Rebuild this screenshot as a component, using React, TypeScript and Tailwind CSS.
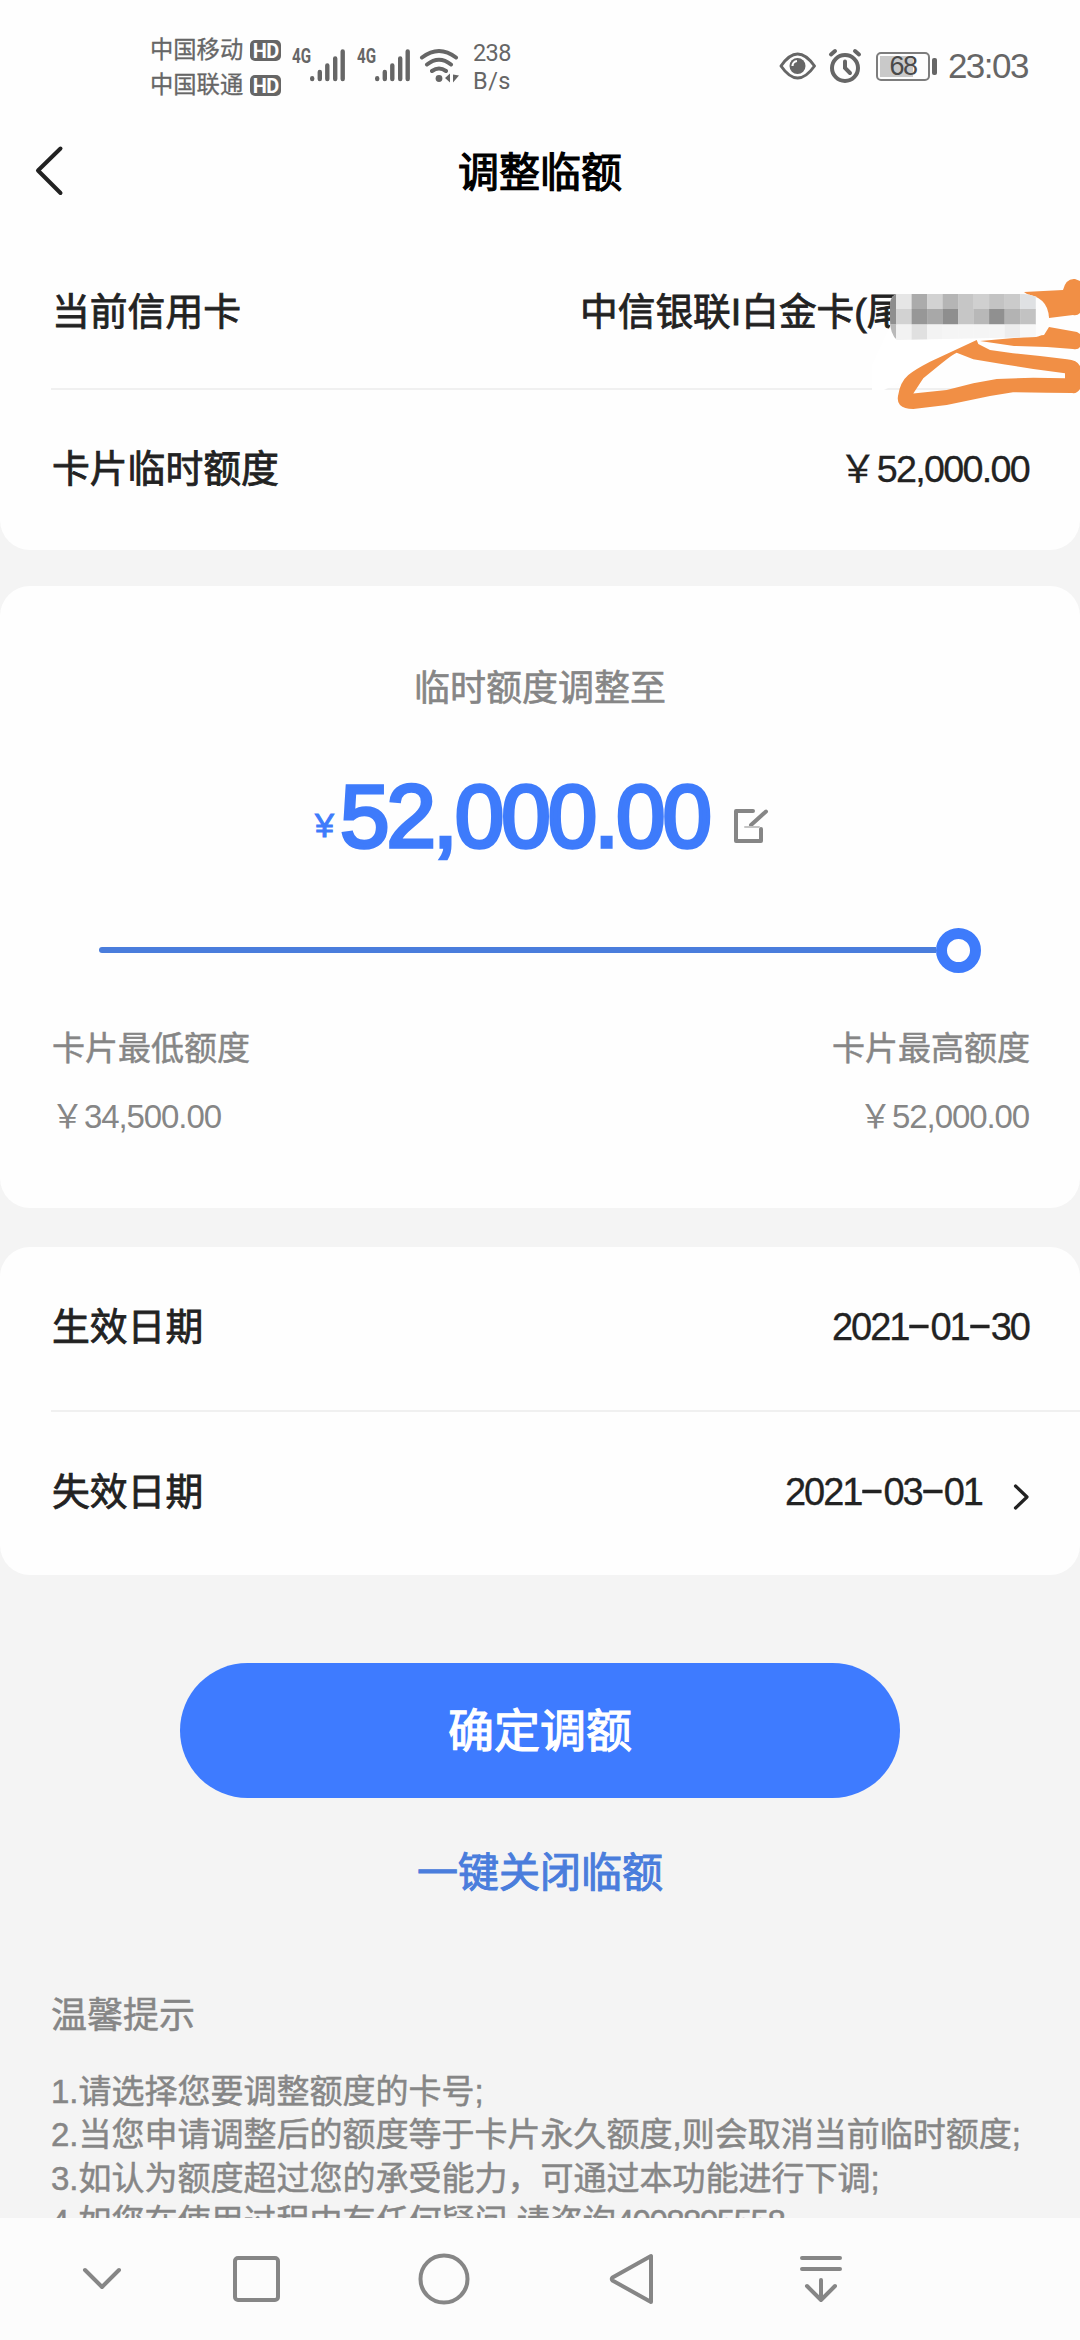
import type { ReactNode } from 'react'

const TIPS = [
  { text: '1.请选择您要调整额度的卡号;' },
  { text: '2.当您申请调整后的额度等于卡片永久额度,则会取消当前临时额度;' },
  { text: '3.如认为额度超过您的承受能力，可通过本功能进行下调;' },
  { text: '4.如您在使用过程中有任何疑问,请咨询', phone: '4008895558' },
]

// mosaic cells, 3 rows from top to bottom
const MOSAIC = [
  ['#8d8d8d', '#e6e6e6', '#ababab', '#d2d2d2', '#b5b5b5', '#c6c6c6', '#d0d0d0', '#c3c3c3', '#cbcbcb', '#dfe1e3'],
  ['#8f8f8f', '#d2d2d2', '#979797', '#a8a8a8', '#8e8e8e', '#c6c6c6', '#b8b8b8', '#909090', '#b3b3b3', '#c2c2c2'],
  ['#b9b9b9', '#f2f2f2', '#e0e0e0', '#f3f3f3', '#f5f5f5', '#f5f5f5', '#f5f5f5', '#f5f5f5', '#ededed', '#f7f7f7'],
]

function Signal() {
  return (
    <div className="flex">
      <span className="w-[18px] h-[18px] text-[20px] leading-[18px] font-bold font-[Roboto] origin-left scale-x-[0.76]">4G</span>
      <svg width="35" height="36" viewBox="0 0 35 36" stroke="#666" strokeWidth="4.4" strokeLinecap="round">
        <path d="M2.2 31.300v.7M9.800 25v7M17.300 18.500v13.500M25.200 11.500v20.500M32.700 4.500v27.500" />
      </svg>
    </div>
  )
}

function Carrier({ name }: { name: string }) {
  return (
    <div className="flex items-center gap-[7px] h-[35px]">
      <span className="text-[23.300px] leading-[35px] [-webkit-text-stroke:0.3px_#666]">{name}</span>
      <span className="w-[31px] h-[21px] rounded-[5px] bg-[#666] text-white text-[20px] leading-[22px] font-bold font-[Roboto] text-center tracking-[-0.5px]">HD</span>
    </div>
  )
}

function StatusBar() {
  return (
    <div className="h-[122px] flex items-start text-[#666] pl-[150px] pr-[52px]">
      <div className="pt-[33px] w-[142px]">
        <Carrier name="中国移动" />
        <Carrier name="中国联通" />
      </div>
      <div className="flex pt-[47px] gap-[12px]">
        <Signal />
        <Signal />
      </div>
      <svg width="42" height="36" viewBox="0 0 42 36" className="mt-[48px] ml-[9px]" fill="none" stroke="#666" strokeWidth="4" strokeLinecap="round">
        <path d="M3 9.500Q20 -3.500 37 9.500M8 16.500Q20 7 32 16.500M13 23Q20 18 27 23" />
        <circle cx="20" cy="30.500" r="3.400" fill="#666" stroke="none" />
        <path d="M26 30l5-4.500v9zM34 26.500v8l6-7z" fill="#666" stroke="none" />
      </svg>
      <div className="pt-[39px] w-[50px] text-right font-[Roboto] text-[23.500px] leading-[28px] tracking-[-0.5px]">
        <div>238</div>
        <div className="tracking-[0.5px]">B/s</div>
      </div>
      <div className="ml-auto flex items-center pt-[46px]">
        <svg width="38" height="40" viewBox="0 0 38 40" fill="none" stroke="#666" strokeWidth="3">
          <path d="M2 20Q18.500 -4 35.500 20Q18.500 44 2 20Z" strokeLinejoin="round" />
          <circle cx="18.500" cy="20" r="8" fill="#666" stroke="none" />
          <path d="M13.500 20a5 5 0 0 1 4.500-5" stroke="#fff" strokeWidth="2.200" />
        </svg>
        <svg width="36" height="40" viewBox="0 0 36 40" className="ml-[10px]" fill="none" stroke="#666" strokeWidth="4" strokeLinecap="round">
          <circle cx="18" cy="22" r="13" />
          <path d="M18 15.500v6.500l5 5" />
          <path d="M4 8.500l4-3.500M32 8.500l-4-3.500" />
        </svg>
        <div className="ml-[13px] w-[54px] h-[29px] rounded-[5px] border-2 border-[#7d7d7d] p-[2px] relative">
          <div className="w-[33px] h-full bg-[#c9c9c9]" />
          <span className="absolute inset-0 text-center text-[27px] leading-[25px] tracking-[-1.500px] text-[#4a4a4a]">68</span>
        </div>
        <div className="ml-[2px] w-[5px] h-[17px] rounded-[2px] bg-[#666]" />
        <span className="ml-[11px] text-[35px] leading-[40px] tracking-[-1.500px]">23:03</span>
      </div>
    </div>
  )
}

function Row({ label, children }: { label: string; children: ReactNode }) {
  return (
    <div className="flex items-center justify-between h-full pl-[52px] pr-[51px] text-[#222]">
      <span className="text-[37.800px] [-webkit-text-stroke:0.8px_#222]">{label}</span>
      {children}
    </div>
  )
}

function Amount({ value }: { value: string }) {
  return (
    <span className="text-[37.700px] [-webkit-text-stroke:0.3px_#222]">
      ￥<span className="tracking-[-1.700px]">{value}</span>
    </span>
  )
}

function DateText({ value }: { value: string }) {
  return (
    <span className="text-[38px] tracking-[-2px] [-webkit-text-stroke:0.3px_#222]">
      {value.split('').map((c, i) =>
        c === '-' ? (
          <span key={i} className="inline-block w-[22px] text-center tracking-normal scale-x-200 -translate-y-[3px]">-</span>
        ) : c
      )}
    </span>
  )
}

function Scribble() {
  return (
    <svg width="216" height="150" viewBox="0 0 216 150" className="absolute right-0 top-[270px]">
      <path fill="#fff" d="M29 50h150v10L80 90L20 120H8V95z" />
      <g fill="#f18f45">
        <path d="M160 22L199 20Q202 8 211 9L216 11V43Q213 46 209 45L185 48Q180 32 166 26Z" />
        <path d="M185 57L213 62L216 64V77Q214 80 209 79L183 77L150 76L116 71L150 68L180 65Z" />
        <path fillRule="evenodd" d="M112.700 70L114.300 74L126 80L149 83.300L176 86L203 89.300Q213 90 216 96V119Q213 124 208 123L182.700 122.700L149 122.300L126 126L82.700 135L49.300 139Q40 139 36 135Q33 132 34 126Q36 112 44.300 105Q50 100 66 91.700ZM92.700 82.700Q89 84 77.700 93.300L59.300 108.300L49.300 123.500L82.700 120L109.300 113.300L132.700 109L169.300 107.700L201 108.300V103.300L169.300 99L139.300 94.300L109.300 89.300Z" />
      </g>
      <clipPath id="mosaic">
        <path d="M33 24H160Q184 26 185 48Q184 65 172 67L33 70Q26 64 26 50V32Q28 25 33 24Z" />
      </clipPath>
      <g clipPath="url(#mosaic)">
        <rect x="20" y="20" width="180" height="60" fill="#fdfdfd" />
        {MOSAIC.map((row, y) =>
          row.map((c, x) => (
            <rect key={`${x}-${y}`} x={16.6 + x * 15.5} y={23.6 + y * 15.4} width="15.700" height="15.600" fill={c} />
          ))
        )}
      </g>
    </svg>
  )
}

function NavBar() {
  return (
    <div className="absolute inset-x-0 bottom-0 h-[122px] bg-[#fcfcfc]">
      <svg width="1080" height="122" viewBox="0 0 1080 122" fill="none" stroke="#868686" strokeWidth="4" strokeLinecap="round" strokeLinejoin="round">
        <path d="M85 52L102 69L119 52" />
        <rect x="235" y="40" width="43" height="42" rx="3" />
        <circle cx="444" cy="61" r="23.500" />
        <path d="M651 38V84L612.500 62.500Q611 61 612.500 59.500Z" />
        <path d="M802 40h38M802 51h38M821 62v20M807 68L821 82L835 68" />
      </svg>
    </div>
  )
}

export default function App() {
  return (
    <div className="relative w-[1080px] h-[2340px] overflow-hidden bg-[#f4f4f4] font-['Liberation_Sans','Noto_Sans_CJK_SC',sans-serif]">
      <div className="bg-[#fefefe] h-[550px] rounded-b-[30px]">
        <StatusBar />
        <div className="h-[115px] grid grid-cols-[1fr_auto_1fr] items-start pl-[34px] pr-[34px]">
          <svg width="32" height="52" viewBox="0 0 32 52" className="mt-[22px]" fill="none" stroke="#222" strokeWidth="4" strokeLinecap="round" strokeLinejoin="round">
            <path d="M26.500 4.500L4 26.500L26.500 49" />
          </svg>
          <h1 className="mt-[21px] text-[41px] leading-[60px] text-black [-webkit-text-stroke:1.2px_#000]">调整临额</h1>
        </div>
        <div className="h-[151px]">
          <Row label="当前信用卡">
            <span className="w-[449px] whitespace-nowrap text-[37.700px] [-webkit-text-stroke:0.8px_#222]">中信银联I白金卡(尾</span>
          </Row>
        </div>
        <div className="ml-[51px] h-[2px] bg-[#f0f0f0]" />
        <div className="h-[159px]">
          <Row label="卡片临时额度">
            <Amount value="52,000.00" />
          </Row>
        </div>
      </div>
      <Scribble />

      <div className="mt-[36px] h-[622px] bg-[#fefefe] rounded-[30px] flex flex-col text-[#868686]">
        <div className="mt-[76px] text-center text-[36px] leading-[54px] [-webkit-text-stroke:0.6px_#868686]">临时额度调整至</div>
        <div className="mt-[45px] h-[110px] pl-[315px] flex items-center text-[#3e7bfb]">
          <span className="w-[25px] pt-[18px] text-[34px] [-webkit-text-stroke:1px_#3e7bfb]">¥</span>
          <span className="w-[379px] whitespace-nowrap text-[89px] leading-[110px] tracking-[-3px] [-webkit-text-stroke:3.500px_#3e7bfb]">52,000.00</span>
          <svg width="38" height="38" viewBox="0 0 38 38" className="mt-[20px] ml-[14px]" fill="none" stroke="#868686" strokeWidth="4" strokeLinecap="round" strokeLinejoin="round">
            <path d="M20 4H3v30h25V22" />
            <path d="M18 18L33 4.500" />
            <path d="M12 20h14" stroke="#c4c4c4" strokeWidth="2" />
          </svg>
        </div>
        <div className="mt-[57px] mx-[99px] h-[44px] flex items-center">
          <div className="flex-1 h-[6px] rounded-l-full bg-[#4a7ddc]" />
          <div className="size-[45px] rounded-full border-[11px] border-[#3e7bfb]" />
        </div>
        <div className="mt-[53px] pl-[52px] pr-[50px] flex justify-between text-[33px] leading-[48px]">
          <div className="[-webkit-text-stroke:0.5px_#868686]">卡片最低额度</div>
          <div className="[-webkit-text-stroke:0.5px_#868686]">卡片最高额度</div>
        </div>
        <div className="mt-[20px] px-[51px] flex justify-between text-[33px] leading-[48px]">
          <span>￥<span className="tracking-[-1.100px]">34,500.00</span></span>
          <span>￥<span className="tracking-[-1.100px]">52,000.00</span></span>
        </div>
      </div>

      <div className="mt-[39px] h-[328px] bg-[#fefefe] rounded-[30px]">
        <div className="h-[161px]">
          <Row label="生效日期">
            <DateText value="2021-01-30" />
          </Row>
        </div>
        <div className="mt-[2px] ml-[51px] h-[2px] bg-[#f0f0f0]" />
        <div className="h-[161px]">
          <Row label="失效日期">
            <div className="flex items-center">
              <DateText value="2021-03-01" />
              <svg width="18" height="28" viewBox="0 0 18 28" className="ml-[29px] mt-[8px]" fill="none" stroke="#222" strokeWidth="3.200" strokeLinecap="round" strokeLinejoin="round">
                <path d="M4.500 3L16 14L4.500 25" />
              </svg>
            </div>
          </Row>
        </div>
      </div>

      <div className="mt-[88px] flex flex-col items-center">
        <button className="w-[720px] h-[135px] pt-[2px] rounded-full bg-[#3e7bff] text-white text-[46px] [-webkit-text-stroke:1.2px_#fff]">确定调额</button>
        <button className="mt-[45px] text-[41px] leading-[60px] text-[#4a7ddc] [-webkit-text-stroke:1px_#4a7ddc]">一键关闭临额</button>
      </div>

      <div className="mt-[85px] px-[51px] text-[#868686] [-webkit-text-stroke:0.5px_#868686]">
        <div className="text-[36px] leading-[56px]">温馨提示</div>
        <div className="mt-[26px] text-[33px] leading-[43.300px] whitespace-nowrap">
          {TIPS.map(({ text, phone }) => (
            <p key={text}>
              {text}
              {phone && <span className="tracking-[-1.500px]">{phone}</span>}
            </p>
          ))}
        </div>
      </div>

      <NavBar />
    </div>
  )
}
